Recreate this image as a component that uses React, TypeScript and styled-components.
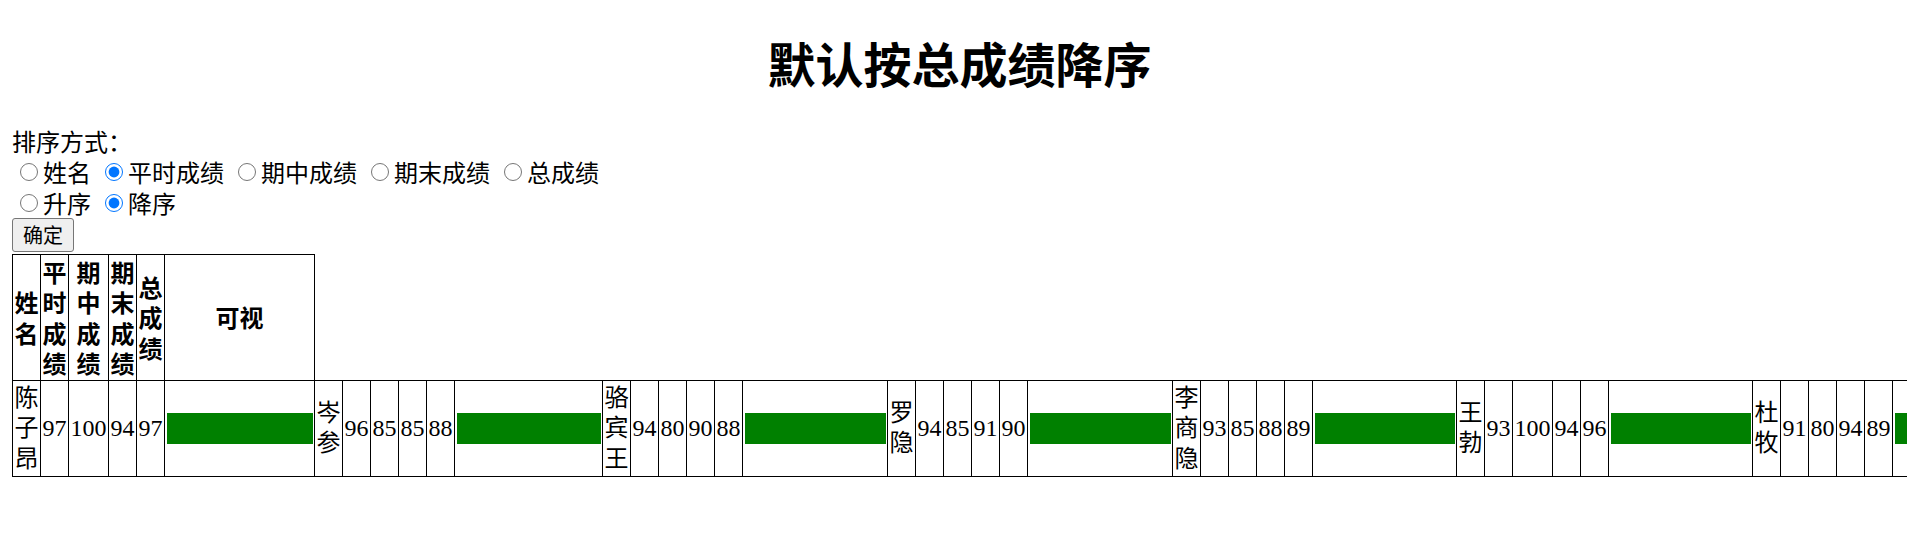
import React from "react";
import styled, { createGlobalStyle } from "styled-components";

const GlobalStyle = createGlobalStyle`
  html { background: #fff; }
  body {
    margin: 0 0 12px 12px;
    font-family: "Liberation Serif", "Noto Sans CJK SC", serif;
    font-size: 24px;
    color: #000;
  }
`;

const Title = styled.h1`
  margin: 32px 0;
  font-family: "Noto Sans CJK SC", sans-serif;
  font-size: 48px;
  font-weight: 700;
  line-height: 61px;
  text-align: center;
`;

const Controls = styled.div`
  display: flex;
  flex-direction: column;
`;

const Line = styled.div`
  display: flex;
  align-items: center;
  height: 31px;
  gap: 6px;
`;

const Option = styled.label`
  display: inline-flex;
  align-items: center;
`;

const Radio = styled.input`
  width: 18px;
  height: 18px;
  margin: 0 5px 0 8px;
`;

const ConfirmButton = styled.button`
  align-self: flex-start;
  margin: 0 0 2px;
  height: 34px;
  padding: 0 10px;
  font-family: "Noto Sans CJK SC", sans-serif;
  font-size: 20px;
  line-height: 1;
  color: #000;
  background: #efefef;
  border: 1px solid #767676;
  border-radius: 3px;
`;

const Table = styled.table`
  border-collapse: collapse;
  line-height: 30.5px;
`;

const HeadCell = styled.th`
  border: 1px solid #000;
  padding: 1.5px;
  font-family: "Noto Sans CJK SC", sans-serif;
  font-weight: 700;
  font-size: 24px;
  text-align: center;
  vertical-align: middle;
`;

const Cell = styled.td`
  border: 1px solid #000;
  padding: 1.5px;
  vertical-align: middle;
  text-align: left;
`;

const Bar = styled.div<{ $w: number }>`
  width: ${(p) => p.$w}px;
  height: 30.5px;
  background: #008000;
`;

const options = ["姓名", "平时成绩", "期中成绩", "期末成绩", "总成绩"];

const students = [
  { name: "陈子昂", s: [97, 100, 94, 97], w: 146 },
  { name: "岑参", s: [96, 85, 85, 88], w: 144 },
  { name: "骆宾王", s: [94, 80, 90, 88], w: 141 },
  { name: "罗隐", s: [94, 85, 91, 90], w: 141 },
  { name: "李商隐", s: [93, 85, 88, 89], w: 140 },
  { name: "王勃", s: [93, 100, 94, 96], w: 140 },
  { name: "杜牧", s: [91, 80, 94, 89], w: 140 },
];

export default function App() {
  return (
    <>
      <GlobalStyle />
      <Title>默认按总成绩降序</Title>
      <Controls>
        <Line>排序方式：</Line>
        <Line>
          {options.map((o) => (
            <Option key={o}>
              <Radio type="radio" name="field" defaultChecked={o === "平时成绩"} />
              {o}
            </Option>
          ))}
        </Line>
        <Line>
          <Option>
            <Radio type="radio" name="order" />
            升序
          </Option>
          <Option>
            <Radio type="radio" name="order" defaultChecked />
            降序
          </Option>
        </Line>
        <ConfirmButton>确定</ConfirmButton>
      </Controls>
      <Table>
        <tbody>
          <tr>
            <HeadCell>姓名</HeadCell>
            <HeadCell>平时成绩</HeadCell>
            <HeadCell>期中成绩</HeadCell>
            <HeadCell>期末成绩</HeadCell>
            <HeadCell>总成绩</HeadCell>
            <HeadCell>可视</HeadCell>
          </tr>
          <tr>
            {students.map((st) => (
              <React.Fragment key={st.name}>
                <Cell>{st.name}</Cell>
                {st.s.map((v, i) => (
                  <Cell key={i}>{v}</Cell>
                ))}
                <Cell>
                  <Bar $w={st.w} />
                </Cell>
              </React.Fragment>
            ))}
          </tr>
        </tbody>
      </Table>
    </>
  );
}
